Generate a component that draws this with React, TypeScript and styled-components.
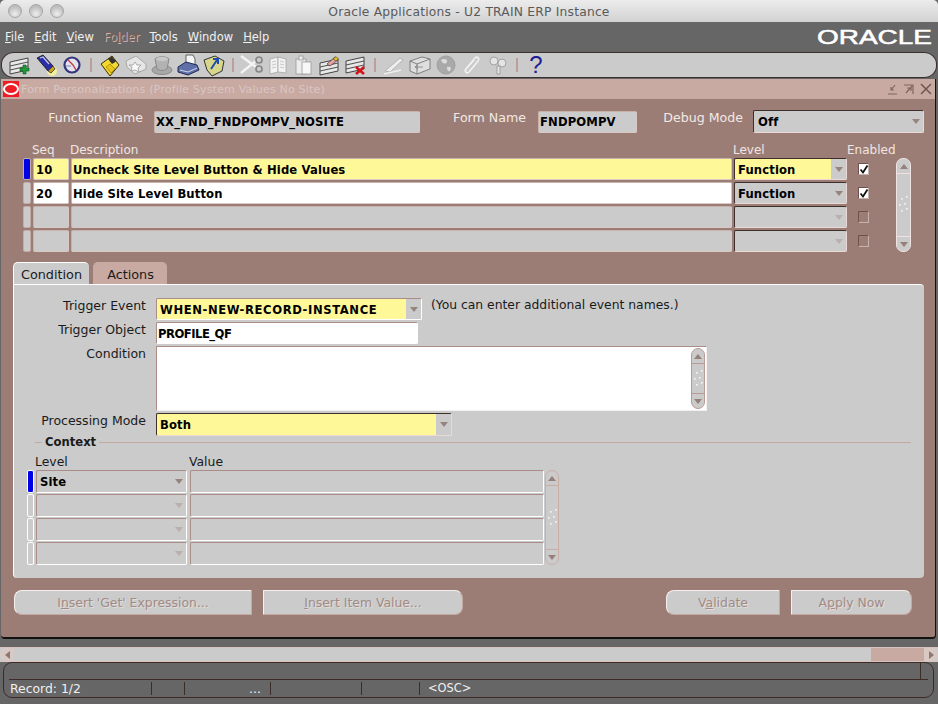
import React from "react";
import styled, { createGlobalStyle } from "styled-components";

const Global = createGlobalStyle`
  * { box-sizing: border-box; }
  html, body { margin: 0; padding: 0; background: #666; }
  body { font-family: "DejaVu Sans", "Noto Sans", sans-serif; font-size: 12px; }
`;

const Screen = styled.div`
  width: 938px; height: 704px; background: #666; overflow: hidden;
  display: flex; flex-direction: column; color: #111;
`;
const TitleBar = styled.div`
  height: 22px; position: relative; display: flex; align-items: center; justify-content: center;
  background: linear-gradient(#ececec, #d2d2d2); border-radius: 5px 5px 0 0; padding-top: 2px;
  color: #5a5a5a; font-size: 12.3px; letter-spacing: 0.2px;
`;
const Lights = styled.div`
  position: absolute; left: 8px; top: 4px; display: flex; gap: 7px;
`;
const Light = styled.span`
  width: 14px; height: 14px; border-radius: 50%; border: 1px solid #a5a5a5;
  background: radial-gradient(circle at 50% 75%, #eee, #bdbdbd 70%);
`;
const MenuBar = styled.div`
  height: 30px; display: flex; align-items: center; padding: 0 0 0 5px; gap: 10px; color: #f0f0f0;
  font-size: 11.5px; position: relative;
`;
const MenuItem = styled.span<{ $off?: boolean }>`
  color: ${(p) => (p.$off ? "#7d5f58" : "#f0f0f0")};
  text-shadow: ${(p) => (p.$off ? "1px 1px 0 #c9b5b0" : "none")};
  u { text-underline-offset: 1px; }
`;
const Logo = styled.svg`
  position: absolute; right: 0; top: 6px; width: 124px; height: 20px; overflow: visible;
`;
const Toolbar = styled.div`
  height: 26px; margin: 0 0 1px 1px; width: 936px; background: #cbcbcb; border: 1px solid #3d2f2d;
  border-radius: 13px / 12px; display: flex; align-items: center; padding-left: 5px;
`;
const ToolIcon = styled.svg`
  width: 26px; height: 24px; flex: none;
`;
const ToolSep = styled.span`
  width: 2px; height: 14px; background: #bd9f99; margin: 0 5px; flex: none;
`;
const Help = styled.span`
  width: 26px; text-align: center; color: #1c1c94; font-family: "Liberation Sans", sans-serif; font-size: 24px; line-height: 24px;
`;
const Win = styled.div`
  margin-left: 1px; width: 935px; height: 560px; background: #9c7d75; display: flex; flex-direction: column;
  border-bottom: 2px solid #111; border-right: 1px solid #111; border-radius: 0 0 4px 4px;
`;
const WinTitle = styled.div`
  height: 20px; background: #c9aaa3; display: flex; align-items: center; padding-left: 2px; flex: none;
  color: #d8c6c1; font-size: 11.2px; gap: 2px;
`;
const OraBadge = styled.span`
  width: 16px; height: 16px; background: #ee1c25; display: flex; align-items: center; justify-content: center; flex: none;
  &::after { content: ""; width: 12px; height: 8px; border: 2px solid #fff; border-radius: 50%; }
`;
const WinTitleText = styled.span`
  flex: 1; letter-spacing: 0.1px;
`;
const WinBtns = styled.svg`
  width: 48px; height: 16px; margin-right: 1px; flex: none;
`;
const HeadRow = styled.div`
  display: flex; align-items: center; height: 23px; margin-top: 11px; flex: none;
`;
const HeadLabel = styled.div<{ $w: number }>`
  width: ${(p) => p.$w}px; flex: none; text-align: right; white-space: nowrap;
  color: #f1e9e6; font-size: 12.6px; line-height: 14px; padding-bottom: 7px;
`;
const PanelLabel = styled.div`
  width: 132px; flex: none; text-align: right; white-space: nowrap;
  color: #1a1a1a; font-size: 12.5px; line-height: 16px;
`;
const Field = styled.div<{ $w?: number; $h?: number; $bg?: string; $ml?: number; $pl?: number; $ls?: number; $bevel?: "form" | "panel" | "combo" }>`
  width: ${(p) => (p.$w ? `${p.$w}px` : "auto")}; height: ${(p) => p.$h ?? 22}px; flex: none;
  margin-left: ${(p) => p.$ml ?? 0}px;
  background: ${(p) => p.$bg ?? "#cbcbcb"}; color: #000; font-weight: 700; font-size: 11.6px;
  padding: 1px 0 0 ${(p) => p.$pl ?? 1}px; display: flex; align-items: center; white-space: nowrap; position: relative; border-radius: 2px;
  letter-spacing: ${(p) => p.$ls ?? 0.13}px;
  border-style: solid; border-width: 1px;
  border-color: ${(p) =>
    p.$bevel === "combo"
      ? "#3f2f2c #ead9d5 #ead9d5 #3f2f2c"
      : p.$bevel === "panel"
      ? "#a98d86 #fff #fff #a98d86"
      : "#c9b2ac #d9c9c5 #d9c9c5 #c9b2ac"};
`;
const ComboArrow = styled.span<{ $dim?: boolean; $bg?: string }>`
  position: absolute; right: 0; top: 0; bottom: 0; width: 15px; display: flex; align-items: center; justify-content: center;
  background: ${(p) => p.$bg ?? "transparent"};
  &::after {
    content: ""; border-left: 4px solid transparent; border-right: 4px solid transparent;
    border-top: 5px solid ${(p) => (p.$dim ? "#b9b0ae" : "#96857f")};
  }
`;
const Table = styled.div`
  display: flex; margin: 10px 0 0 22px; flex: none;
`;
const TableCols = styled.div`
  display: flex; flex-direction: column; gap: 2px;
`;
const HeadCols = styled.div`
  display: flex; height: 13px; color: #efe6e3; font-size: 12px; line-height: 15px;
`;
const HeadCell = styled.span<{ $w: number }>`
  width: ${(p) => p.$w}px; flex: none; white-space: nowrap;
`;
const Row = styled.div`
  display: flex; gap: 2px;
`;
const Marker = styled.span<{ $on?: boolean; $w?: number; $light?: boolean }>`
  width: ${(p) => p.$w ?? 8}px; flex: none; border-radius: 2px; position: relative;
  background: ${(p) => (p.$on ? "#0000e6" : "#cbcbcb")};
  border: 1px solid ${(p) => (p.$light ? "#fff" : "#c5aca6")};
`;
const CheckCell = styled.div`
  width: 28px; flex: none; display: flex; align-items: center; justify-content: center;
`;
const Check = styled.span<{ $on?: boolean }>`
  width: 11px; height: 12px; position: relative; display: block;
  border: 1px solid; border-color: #6f524c #c7b2ad #c7b2ad #6f524c;
  background: ${(p) => (p.$on ? "#fff" : "transparent")};
  svg { position: absolute; left: 0; top: 0; }
`;
const ScrollWrap = styled.div<{ $w: number; $h: number; $mt: number; $ml: number; $edge: string }>`
  width: ${(p) => p.$w}px; height: ${(p) => p.$h}px; margin: ${(p) => p.$mt}px 0 0 ${(p) => p.$ml}px; flex: none;
  display: flex; flex-direction: column; background: #cbcbcb;
  border: 1px solid ${(p) => p.$edge}; border-radius: 7px;
`;
const ScrollEnd = styled.div<{ $up?: boolean; $edge: string }>`
  height: 15px; flex: none; display: flex; align-items: center; justify-content: center;
  ${(p) => (p.$up ? `border-bottom: 1px solid ${p.$edge};` : `border-top: 1px solid ${p.$edge};`)}
  &::after {
    content: ""; border-left: 4px solid transparent; border-right: 4px solid transparent;
    ${(p) => (p.$up ? "border-bottom" : "border-top")}: 5px solid #96807a;
  }
`;
const ScrollMid = styled.div`
  flex: 1; display: flex; align-items: center; justify-content: center;
`;
const Tabs = styled.div`
  display: flex; margin: 10px 0 0 12px; height: 22px; gap: 4px; flex: none;
`;
const Tab = styled.div<{ $active?: boolean; $w: number }>`
  width: ${(p) => p.$w}px; border-radius: 5px 5px 0 0; display: flex; align-items: center; justify-content: center;
  background: ${(p) => (p.$active ? "#cbcbcb" : "#c9aaa3")}; color: #1a1a1a; font-size: 12.8px; padding-top: 1px;
  border-top: 1px solid ${(p) => (p.$active ? "#fff" : "#c9aaa3")};
  border-left: 1px solid ${(p) => (p.$active ? "#fff" : "#c9aaa3")};
`;
const Panel = styled.div`
  margin-left: 12px; width: 911px; height: 294px; background: #cbcbcb; border-radius: 0 4px 4px 4px; flex: none;
  border-top: 1px solid #fff; border-left: 1px solid #fff; padding-top: 13px; display: flex; flex-direction: column;
`;
const PanelRow = styled.div<{ $mt?: number }>`
  display: flex; align-items: flex-start; margin-top: ${(p) => p.$mt ?? 0}px; flex: none;
`;
const Hint = styled.span`
  margin-left: 9px; font-size: 12.35px; line-height: 14px; color: #1a1a1a;
`;
const TextBox = styled.div`
  width: 551px; height: 65px; margin-left: 10px; flex: none; background: #fff; display: flex; justify-content: flex-end;
  border: 1px solid; border-color: #a98d86 #f1f1f1 #f1f1f1 #a98d86; padding: 1px;
`;
const Legend = styled.div`
  display: flex; align-items: center; margin: -1px 13px 0 21px; height: 14px; gap: 3px; font-weight: 700; font-size: 11.6px; color: #1a1a1a; flex: none;
  &::before { content: ""; width: 7px; height: 1px; background: #c4a8a2; }
  &::after { content: ""; flex: 1; height: 1px; background: #c4a8a2; }
`;
const CtxTable = styled.div`
  margin: 5px 0 0 13px; display: flex; flex: none;
`;
const CtxCols = styled.div`
  display: flex; flex-direction: column; gap: 1px;
`;
const CtxHead = styled.div`
  display: flex; height: 15px; color: #1a1a1a; font-size: 12.4px; line-height: 16px; padding-left: 8px;
`;
const Buttons = styled.div`
  display: flex; margin: 12px 0 0 13px; height: 25px; flex: none;
`;
const Btn = styled.div<{ $w: number; $ml?: number; $side: "l" | "r" }>`
  width: ${(p) => p.$w}px; margin-left: ${(p) => p.$ml ?? 0}px; flex: none;
  background: #cbcbcb; color: #a08c87; font-size: 12.4px; display: flex; align-items: center; justify-content: center;
  text-shadow: 1px 1px 0 #e4dcda; white-space: pre;
  border: 1px solid; border-color: #f5f0ef #c4a8a2 #c4a8a2 #f5f0ef;
  border-radius: ${(p) => (p.$side === "l" ? "8px 1px 1px 8px" : "1px 8px 8px 1px")};
`;
const HScroll = styled.div`
  height: 15px; margin-top: 8px; flex: none; display: flex; background: #cbcbcb;
  border-top: 1px solid #d8c4bf; border-bottom: 1px solid #d8c4bf;
`;
const HEnd = styled.div<{ $left?: boolean }>`
  width: 14px; background: #d9c9c5; display: flex; align-items: center; justify-content: center;
  border-radius: ${(p) => (p.$left ? "7px 0 0 7px" : "0 7px 7px 0")};
  &::after {
    content: ""; border-top: 4px solid transparent; border-bottom: 4px solid transparent;
    ${(p) => (p.$left ? "border-right" : "border-left")}: 5px solid #8f7670;
  }
`;
const HTrack = styled.div`
  flex: 1;
`;
const HThumb = styled.div`
  width: 53px; background: #c9aaa3;
`;
const Status = styled.div`
  margin: 0 0 0 3px; width: 931px; height: 36px; flex: none; border: 1px solid #3d2b28;
  border-radius: 9px; display: flex; flex-direction: column;
`;
const StatusTop = styled.div`
  height: 17px; margin: 0 5px; border-bottom: 1px solid #3d2b28; display: flex; justify-content: flex-end; padding-right: 7px;
  &::after { content: ""; width: 1px; background: #3d2b28; }
`;
const StatusLine = styled.div`
  display: flex; height: 13px; margin: 2px 0 0 6px; align-items: center; color: #f0f0f0; font-size: 12.4px;
`;
const StatusCell = styled.span<{ $w: number; $pl?: number }>`
  width: ${(p) => p.$w}px; height: 13px; line-height: 13px; border-right: 1px solid #3d2b28; white-space: nowrap;
  padding-left: ${(p) => p.$pl ?? 0}px; flex: none;
`;
const StatusLast = styled.span`
  padding-left: 8px; line-height: 13px; font-size: 11.4px;
`;

const Dots = () => (
  <svg width="11" height="20" viewBox="0 0 11 20">
    {[[3, 3], [8, 1], [1, 9], [6, 8], [3, 15], [8, 13]].map(([x, y], i) => (
      <rect key={i} x={x} y={y} width="1.6" height="1.6" fill="#f6f6f6" />
    ))}
  </svg>
);

const VScroll = ({ w, h, mt, ml, edge }: { w: number; h: number; mt: number; ml: number; edge: string }) => (
  <ScrollWrap $w={w} $h={h} $mt={mt} $ml={ml} $edge={edge}>
    <ScrollEnd $up $edge={edge} />
    <ScrollMid><Dots /></ScrollMid>
    <ScrollEnd $edge={edge} />
  </ScrollWrap>
);

const Form = ({ x = 3, y = 5 }: { x?: number; y?: number }) => (
  <g transform={`translate(${x} ${y})`}>
    <path d="M0 4 L18 0 V12 L0 16 Z" fill="#e8e8e8" stroke="#444" strokeWidth="1" />
    <path d="M0 8 L18 4 M0 12 L18 8" stroke="#555" strokeWidth="1.2" />
  </g>
);

const icons: React.ReactNode[] = [
  <g key="new"><Form /><path d="M16 12h3v3h3v3h-3v3h-3v-3h-3v-3h3z" fill="#1f9a3a" stroke="#0b5a1b" strokeWidth=".6" /></g>,
  <g key="torch">
    <circle cx="19" cy="18" r="5" fill="#f4f09a" />
    <path d="M4 5 L10 2 L20 13 L15 18 Z" fill="#2a2fa8" stroke="#111" strokeWidth=".8" />
    <path d="M7 5 L10 4 L16 11" stroke="#c8c8e8" strokeWidth="1.2" fill="none" />
    <path d="M15 18 L20 13 L22 16 L18 20 Z" fill="#c9a227" stroke="#333" strokeWidth=".8" />
  </g>,
  <g key="compass">
    <circle cx="13" cy="12" r="7.5" fill="#e4e4ee" stroke="#34347c" strokeWidth="2.2" />
    <path d="M9 7 L14 12 L17 17" stroke="#c2403f" strokeWidth="1.4" fill="none" />
    <path d="M7 13 H12" stroke="#8080a8" />
  </g>,
  <g key="floppy">
    <path d="M4 11 L15 3 L22 12 L13 23 Z" fill="#f6d92f" stroke="#3b3000" strokeWidth="1" />
    <path d="M11 6 L15 3.5 L19 8.5 L15 11 Z" fill="#333" />
    <path d="M9 14 L13 11 L18 16 L14 20 Z" fill="#e8c41d" stroke="#8a7400" strokeWidth=".6" />
  </g>,
  <g key="star" stroke="#9a9a9a" strokeWidth=".8">
    <path d="M3 8 L13 3 L23 11 L23 16 L12 21 L4 14 Z" fill="#e6e6e6" />
    <path d="M12 9 L14 12 L18 12 L15 15 L16 19 L12 17 L8 18 L9 14 L6 12 L10 12 Z" fill="#f8f8f8" />
  </g>,
  <g key="hat">
    <ellipse cx="13" cy="17" rx="10" ry="4.5" fill="#a8a8a8" stroke="#8a8a8a" />
    <path d="M6 6 C9 3 17 3 20 6 L18 16 C15 18 11 18 8 16 Z" fill="#b2b2b2" stroke="#8a8a8a" />
    <ellipse cx="13" cy="6" rx="6" ry="2.2" fill="#c8c8c8" />
  </g>,
  <g key="printer">
    <path d="M11 2 L18 2 L20 6 L20 12 L11 12 Z" fill="#f6f6f6" stroke="#444" strokeWidth=".8" />
    <path d="M3 14 L11 9 L22 12 L24 17 L13 22 L3 19 Z" fill="#5f6fa8" stroke="#1f2a55" strokeWidth="1" />
    <path d="M5 17 L13 19 L22 15" stroke="#d0d6ea" fill="none" />
  </g>,
  <g key="folder">
    <path d="M3 7 L14 3 L23 8 L21 18 L11 23 L6 17 Z" fill="#d8d68a" stroke="#333" strokeWidth="1" />
    <path d="M10 16 L16 7 M12 6 L17 6 L17 11" stroke="#1d4fb0" strokeWidth="2" fill="none" />
  </g>,
  <g key="cut" fill="none">
    <path d="M2 3 L17 14 M2 20 L17 8" strokeWidth="2.4" stroke="#f4f4f4" />
    <circle cx="20" cy="7" r="3" stroke="#888" strokeWidth="1.7" />
    <circle cx="20" cy="16" r="3" stroke="#888" strokeWidth="1.7" />
  </g>,
  <g key="copy" stroke="#a4a4a4" strokeWidth=".8" fill="#f3f3f3">
    <path d="M5 6 L13 4 V19 L5 21 Z" />
    <path d="M13 4 L21 6 V20 L13 19 Z" />
    <path d="M7 9 L11 8 M7 12 L11 11 M7 15 L11 14 M15 8 L19 9 M15 11 L19 12 M15 14 L19 15" stroke="#bbb" />
  </g>,
  <g key="paste" stroke="#999" strokeWidth=".8" fill="#ededed">
    <rect x="5" y="6" width="10" height="15" />
    <rect x="11" y="9" width="9" height="12" fill="#f8f8f8" />
    <rect x="8" y="3" width="4" height="4" />
  </g>,
  <g key="edit"><Form y={6} /><path d="M10 11 L18 4 L21 7 L13 13 Z" fill="#e8a3a0" stroke="#333" strokeWidth=".7" /><path d="M16 6 L19 3.5 L21.5 6 L19 8 Z" fill="#e8c41d" stroke="#333" strokeWidth=".6" /></g>,
  <g key="del"><Form y={4} /><path d="M13 14 L21 21 M21 14 L13 21" stroke="#d3121a" strokeWidth="2.6" /></g>,
  <g key="pen" stroke="#a8a8a8" strokeWidth=".8" fill="#ededed">
    <path d="M4 18 L19 5 L22 7 L9 19 Z" />
    <path d="M3 21 L20 17" stroke="#eee" strokeWidth="1.4" />
  </g>,
  <g key="box" stroke="#777" strokeWidth=".9" fill="#dedede">
    <path d="M3 8 L15 4 L23 6 V16 L10 21 L3 18 Z" />
    <path d="M3 8 L10 11 V21 M10 11 L23 6" fill="none" />
    <path d="M8 14 H16 M8 14 L11 12 M8 14 L11 16" stroke="#888" fill="none" />
  </g>,
  <g key="globe"><circle cx="13" cy="12" r="9" fill="#a9a9a9" stroke="#a0a0a0" /><path d="M8 7 C11 5 15 6 14 9 C12 12 9 10 8 7 Z M14 14 C17 13 19 14 17 18 C15 19 14 17 14 14 Z" fill="#dcdcdc" /></g>,
  <path key="clip" d="M6 17 L16 5 C18 3 21 5 19 8 L10 19 C8 21 5 19 7 16 L15 7" fill="none" stroke="#f3f3f3" strokeWidth="1.5" />,
  <g key="tools" fill="#e4e4e4" stroke="#949494" strokeWidth=".8">
    <circle cx="9" cy="8" r="4" />
    <circle cx="17" cy="10" r="4" />
    <rect x="12" y="13" width="3" height="8" />
  </g>,
];

const groups = [[0, 1, 2], [3, 4, 5, 6, 7], [8, 9, 10, 11, 12], [13, 14, 15, 16, 17]];

const Combo = ({ w, h, text, bg, dim, greyEnd, ml, bevel, pl = 3, ls }: { w: number; h?: number; text?: string; bg?: string; dim?: boolean; greyEnd?: boolean; ml?: number; bevel?: "combo" | "panel" | "form"; pl?: number; ls?: number }) => (
  <Field $w={w} $h={h} $bg={bg} $ml={ml} $pl={pl} $ls={ls} $bevel={bevel ?? "combo"}>
    {text}
    <ComboArrow $dim={dim} $bg={greyEnd ? "#cbcbcb" : undefined} />
  </Field>
);

const Tick = () => (
  <svg width="10" height="11" viewBox="0 0 10 11">
    <path d="M1.5 5.5 L4 8.5 L8.5 1.5" fill="none" stroke="#111" strokeWidth="1.8" />
  </svg>
);

const Y = "#fff899";

const rows = [
  { seq: "10", desc: "Uncheck Site Level Button & Hide Values", level: "Function", on: true, check: true },
  { seq: "20", desc: "Hide Site Level Button", level: "Function", check: true },
  { seq: "", desc: "", level: "" },
  { seq: "", desc: "", level: "" },
];

export default function App() {
  return (
    <Screen>
      <Global />
      <TitleBar>
        <Lights><Light /><Light /><Light /></Lights>
        Oracle Applications - U2 TRAIN ERP Instance
      </TitleBar>
      <MenuBar>
        <MenuItem><u>F</u>ile</MenuItem>
        <MenuItem><u>E</u>dit</MenuItem>
        <MenuItem><u>V</u>iew</MenuItem>
        <MenuItem $off>Fo<u>l</u>der</MenuItem>
        <MenuItem><u>T</u>ools</MenuItem>
        <MenuItem><u>W</u>indow</MenuItem>
        <MenuItem><u>H</u>elp</MenuItem>
        <Logo viewBox="0 0 124 20">
          <text x="3" y="16" textLength="115" lengthAdjust="spacingAndGlyphs" fontFamily="Liberation Sans" fontSize="19.5" fill="#fff" stroke="#fff" strokeWidth="0.5">ORACLE</text>
        </Logo>
      </MenuBar>
      <Toolbar>
        {groups.map((g, i) => (
          <React.Fragment key={i}>
            {g.map((n) => <ToolIcon key={n} viewBox="0 0 26 24">{icons[n]}</ToolIcon>)}
            <ToolSep />
          </React.Fragment>
        ))}
        <Help>?</Help>
      </Toolbar>
      <Win>
        <WinTitle>
          <OraBadge />
          <WinTitleText>Form Personalizations (Profile System Values No Site)</WinTitleText>
          <WinBtns viewBox="0 0 48 16">
            <path d="M2 13 H11 M9 4 L5 9 M5 6 V9 H8" stroke="#7d6660" strokeWidth="1.2" fill="none" />
            <path d="M18 4 H27 V13 M26 5 L20 12 M21 7 H25 V10" stroke="#7d6660" strokeWidth="1.2" fill="none" />
            <path d="M35 3 L45 13 M45 3 L35 13" stroke="#6d5650" strokeWidth="1.5" />
          </WinBtns>
        </WinTitle>
        <HeadRow>
          <HeadLabel $w={142}>Function Name</HeadLabel>
          <Field $w={266} $ml={11}>XX_FND_FNDPOMPV_NOSITE</Field>
          <HeadLabel $w={106}>Form Name</HeadLabel>
          <Field $w={99} $ml={12}>FNDPOMPV</Field>
          <HeadLabel $w={106}>Debug Mode</HeadLabel>
          <Combo w={171} h={23} ml={10} text="Off" pl={4} />
        </HeadRow>
        <Table>
          <TableCols>
            <HeadCols>
              <HeadCell $w={9} />
              <HeadCell $w={38}>Seq</HeadCell>
              <HeadCell $w={663}>Description</HeadCell>
              <HeadCell $w={114}>Level</HeadCell>
              <HeadCell $w={49}>Enabled</HeadCell>
            </HeadCols>
            {rows.map((r, i) => (
              <Row key={i}>
                <Marker $on={r.on} />
                <Field $w={36} $pl={2} $bg={r.on ? Y : r.seq ? "#fff" : undefined}>{r.seq}</Field>
                <Field $w={661} $bg={r.on ? Y : r.seq ? "#fff" : undefined}>{r.desc}</Field>
                <Combo w={113} text={r.level} bg={r.on ? Y : undefined} greyEnd={r.on} dim={!r.level} />
                <CheckCell>
                  <Check $on={r.check}>{r.check && <Tick />}</Check>
                </CheckCell>
              </Row>
            ))}
          </TableCols>
          <VScroll w={15} h={94} mt={15} ml={0} edge="#efe4e1" />
        </Table>
        <Tabs>
          <Tab $active $w={76}>Condition</Tab>
          <Tab $w={74}>Actions</Tab>
        </Tabs>
        <Panel>
          <PanelRow>
            <PanelLabel>Trigger Event</PanelLabel>
            <Combo w={266} ml={10} text="WHEN-NEW-RECORD-INSTANCE" bg={Y} greyEnd bevel="panel" ls={0.6} />
            <Hint>(You can enter additional event names.)</Hint>
          </PanelRow>
          <PanelRow $mt={2}>
            <PanelLabel>Trigger Object</PanelLabel>
            <Field $w={262} $ml={10} $bg="#fff" $bevel="panel" $ls={-0.5}>PROFILE_QF</Field>
          </PanelRow>
          <PanelRow $mt={2}>
            <PanelLabel>Condition</PanelLabel>
            <TextBox>
              <VScroll w={14} h={61} mt={0} ml={0} edge="#b89b94" />
            </TextBox>
          </PanelRow>
          <PanelRow $mt={2}>
            <PanelLabel>Processing Mode</PanelLabel>
            <Combo w={296} h={23} ml={10} text="Both" bg={Y} greyEnd />
          </PanelRow>
          <Legend>Context</Legend>
          <CtxTable>
            <CtxCols>
              <CtxHead>
                <HeadCell $w={154}>Level</HeadCell>
                <HeadCell $w={200}>Value</HeadCell>
              </CtxHead>
              {["Site", "", "", ""].map((t, i) => (
                <Row key={i}>
                  <Marker $on={i === 0} $w={7} $light />
                  <Combo w={151} h={23} text={t} dim={!t} bevel="panel" />
                  <Field $w={354} $h={23} $ml={1} $bevel="panel" />
                </Row>
              ))}
            </CtxCols>
            <VScroll w={14} h={95} mt={16} ml={1} edge="#c9aea8" />
          </CtxTable>
        </Panel>
        <Buttons>
          <Btn $w={238} $side="l"><span>I<u>n</u>sert 'Get' Expression...</span></Btn>
          <Btn $w={200} $ml={11} $side="r"><span><u>I</u>nsert Item Value...</span></Btn>
          <Btn $w={114} $ml={203} $side="l"><span>V<u>a</u>lidate</span></Btn>
          <Btn $w={121} $ml={11} $side="r"><span>A<u>p</u>ply Now</span></Btn>
        </Buttons>
      </Win>
      <HScroll>
        <HEnd $left />
        <HTrack />
        <HThumb />
        <HEnd />
      </HScroll>
      <Status>
        <StatusTop />
        <StatusLine>
          <StatusCell $w={142}>Record: 1/2</StatusCell>
          <StatusCell $w={33} />
          <StatusCell $w={86} $pl={64}>...</StatusCell>
          <StatusCell $w={91} />
          <StatusCell $w={58} />
          <StatusLast>&lt;OSC&gt;</StatusLast>
        </StatusLine>
      </Status>
    </Screen>
  );
}
